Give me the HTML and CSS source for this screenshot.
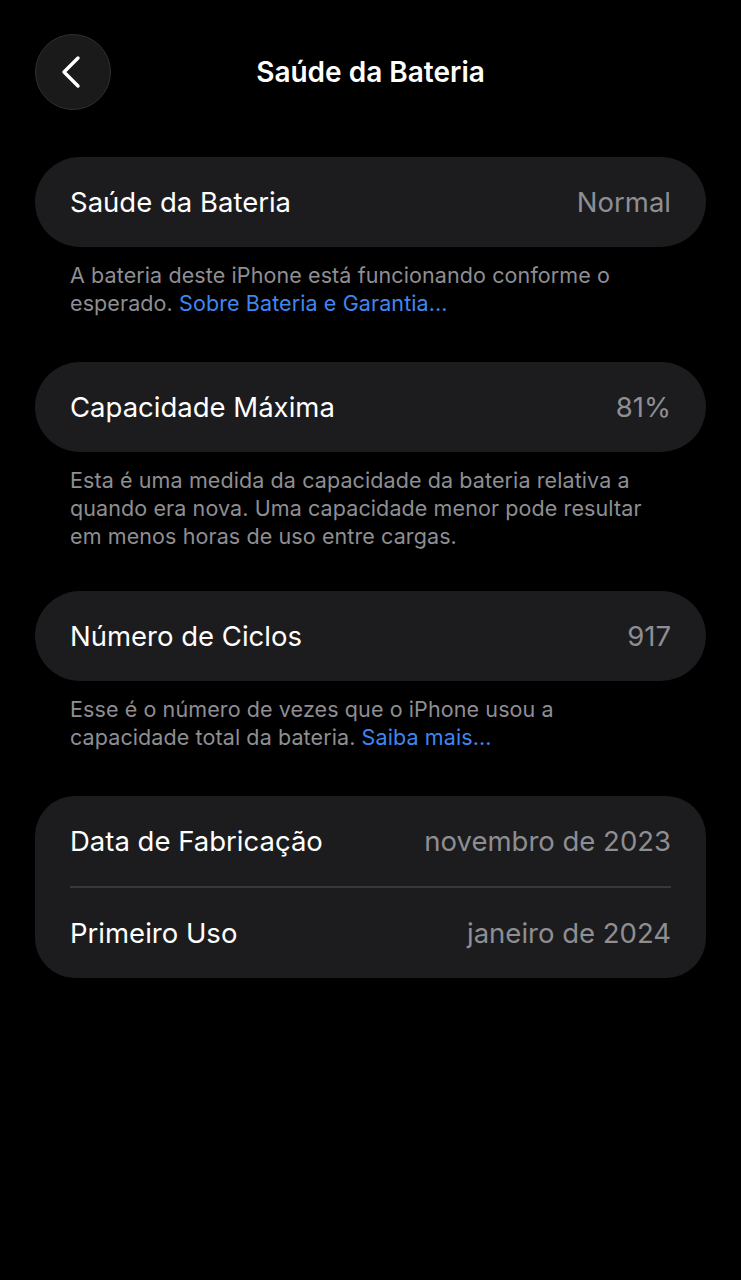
FILE: index.html
```html
<!DOCTYPE html>
<html lang="pt-BR">
<head>
<meta charset="utf-8">
<title>Saúde da Bateria</title>
<link rel="stylesheet" href="styles.css">
</head>
<body>
<div class="screen">
  <header class="nav">
    <button class="back" aria-label="Voltar">
      <svg width="28" height="36" viewBox="0 0 28 36"><path d="M21 4 L7 18 L21 32" fill="none" stroke="#fff" stroke-width="3.4" stroke-linecap="round" stroke-linejoin="round"/></svg>
    </button>
    <h1 class="title">Saúde da Bateria</h1>
  </header>

  <section class="group">
    <div class="row"><span class="label">Saúde da Bateria</span><span class="value">Normal</span></div>
  </section>
  <p class="note">A bateria deste iPhone está funcionando conforme o esperado. <a class="link">Sobre Bateria e Garantia...</a></p>

  <section class="group">
    <div class="row"><span class="label">Capacidade Máxima</span><span class="value">81%</span></div>
  </section>
  <p class="note note-long">Esta é uma medida da capacidade da bateria relativa a quando era nova. Uma capacidade menor pode resultar em menos horas de uso entre cargas.</p>

  <section class="group">
    <div class="row"><span class="label">Número de Ciclos</span><span class="value">917</span></div>
  </section>
  <p class="note">Esse é o número de vezes que o iPhone usou a capacidade total da bateria. <a class="link">Saiba mais...</a></p>

  <section class="group group-multi">
    <div class="row"><span class="label">Data de Fabricação</span><span class="value">novembro de 2023</span></div>
    <div class="sep"></div>
    <div class="row"><span class="label">Primeiro Uso</span><span class="value">janeiro de 2024</span></div>
  </section>
</div>
</body>
</html>
```
FILE: styles.css
```css
html, body {
  margin: 0;
  padding: 0;
  background: #000;
}
body {
  font-family: Inter, "Noto Sans", sans-serif;
  color: #fff;
  width: 741px;
  min-height: 1280px;
}
.screen {
  padding: 34px 35px 0 35px;
}
.nav {
  position: relative;
  height: 76px;
  display: flex;
  align-items: center;
  justify-content: center;
  margin-bottom: 47px;
}
.back {
  position: absolute;
  left: 0;
  top: 0;
  width: 76px;
  height: 76px;
  border-radius: 50%;
  background: #1a1a1a;
  border: 1.5px solid #303030;
  display: flex;
  align-items: center;
  justify-content: center;
  padding: 0;
  padding-right: 4px;
  box-sizing: border-box;
}
.title {
  margin: 0;
  font-size: 28px;
  font-weight: 600;
  letter-spacing: 0;
  color: #fff;
}
.group {
  background: #1c1c1e;
  border-radius: 45px;
  padding: 0 35px;
}
.group-multi {
  border-radius: 40px;
}
.row {
  height: 90px;
  display: flex;
  align-items: center;
  justify-content: space-between;
  font-size: 27.5px;
  letter-spacing: 0;
}
.label {
  color: #fff;
}
.value {
  color: #8e8e93;
}
.sep {
  height: 1.5px;
  background: #38383a;
}
.note {
  margin: 0;
  padding: 14px 35px 45px 35px;
  font-size: 21.5px;
  line-height: 28px;
  color: #8e8e93;
  letter-spacing: 0.1px;
}
.note-long {
  padding-bottom: 41px;
}
.link {
  color: #3f86f0;
}
```
